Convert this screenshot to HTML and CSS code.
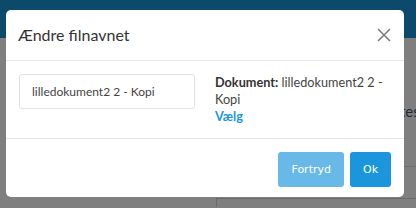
FILE: index.html
```html
<!DOCTYPE html>
<html>

<head>
  <link rel="stylesheet" href="styles.css">
  <title>Ændre filnavnet</title>
</head>
<body>
  <!-- page behind the dialog (already dimmed) -->
  <div class="page">
    <div class="topbar"></div>
    <div class="page-body">
      <div class="bg-text">tes</div>
      <div class="bg-rule"></div>
      <div class="bg-box"></div>
    </div>
  </div>

  <div class="modal">
    <div class="modal-header">
      <div class="modal-title">Ændre filnavnet</div>
      <button class="close" title="Luk">
        <svg width="14" height="14" viewBox="0 0 14 14">
          <path d="M1 1 L13 13 M13 1 L1 13" stroke="#7a7a7a" stroke-width="1.5" fill="none"/>
        </svg>
      </button>
    </div>
    <div class="modal-body">
      <div>
        <input type="text" id="filename" class="name-input" value="lilledokument2 2 - Kopi">
      </div>
      <div class="doc-info">
        <b>Dokument:</b> lilledokument2 2 - Kopi<br>
        <a href="#" class="pick">Vælg</a>
      </div>
    </div>
    <div class="modal-footer">
      <button id="cancel" class="btn btn-light">Fortryd</button>
      <button id="ok" class="btn btn-primary">Ok</button>
    </div>
  </div>
</body>

</html>
```

FILE: styles.css
```css
html {
  overflow: hidden;
}

body {
  margin: 0;
  width: 416px;
  height: 208px;
  overflow: hidden;
  font-family: Lato, "Open Sans", sans-serif;
  background-color: #7f7f7f;
  /* grey backdrop */
}

.topbar {
  height: 38px;
  background-color: #0c4a6c;
}

.page-body {
  display: flex;
  flex-direction: column;
}

.bg-text {
  margin-top: 65px;
  margin-left: 400px;
  font-size: 15px;
  line-height: 16px;
  white-space: nowrap;
  color: #1c2a36;
}

.bg-rule {
  margin-top: 47px;
  margin-left: 216px;
  border-top: 1px solid #6e6e6e;
}

.bg-box {
  margin-top: 31px;
  margin-left: 216px;
  height: 8px;
  border-top: 1px solid #6a6a6a;
  border-left: 1px solid #6a6a6a;
}

.modal {
  position: absolute;
  left: 6px;
  top: 10px;
  width: 398px;
  background-color: #fff;
  border-radius: 5px;
  color: #333;
}

.modal-header {
  display: flex;
  align-items: center;
  justify-content: space-between;
  height: 50px;
  padding: 0 13px 0 12px;
  border-bottom: 1px solid #e3e6ea;
}

.modal-title {
  font-size: 16px;
  line-height: 20px;
  color: #333;
}

.close {
  border: none;
  background: none;
  padding: 0;
  width: 14px;
  height: 14px;
  display: flex;
}

.modal-body {
  display: grid;
  grid-template-columns: 1fr 1fr;
  grid-gap: 20px;
  padding: 13px;
  border-bottom: 1px solid #e3e6ea;
}

.name-input {
  box-sizing: border-box;
  width: 100%;
  height: 35px;
  padding: 0 12px;
  border: 1px solid #dfe3e8;
  border-radius: 3px;
  font-family: Lato, sans-serif;
  font-size: 12px;
  color: #444;
}

.doc-info {
  font-size: 12.7px;
  line-height: 17px;
  color: #444;
}

.doc-info b {
  color: #333;
}

.pick {
  color: #1b96dc;
  font-weight: bold;
  text-decoration: none;
}

.modal-footer {
  display: flex;
  justify-content: flex-end;
  gap: 6px;
  padding: 13px 13px 10px;
}

.btn {
  height: 35px;
  padding: 0 13px;
  border: none;
  border-radius: 3px;
  font-family: "DejaVu Sans", Verdana, sans-serif;
  font-size: 11px;
  color: #fff;
  cursor: pointer;
}

.btn-light {
  background-color: #69b9e8;
}

.btn-primary {
  background-color: #1b96dc;
}
```
